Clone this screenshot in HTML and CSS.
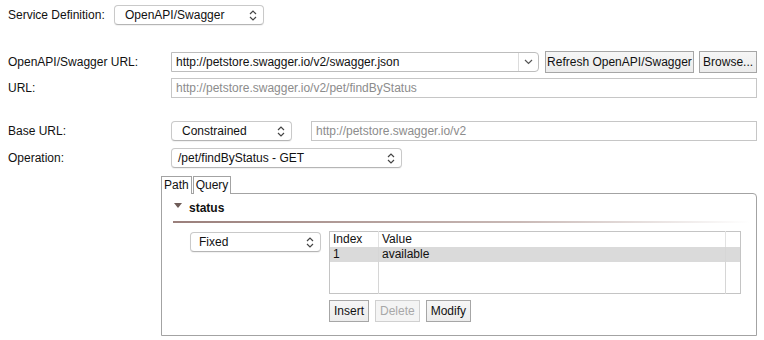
FILE: index.html
```html
<!DOCTYPE html>
<html>
<head>
    <title>Service Definition</title>
    <link rel="stylesheet" href="styles.css">
</head>
<body>
    <div class="form">
        <div class="row row-service">
            <span class="label label-short">Service Definition:</span>
            <div class="select select-service">
                <span>OpenAPI/Swagger</span>
                <svg class="updown" width="8" height="11" viewBox="0 0 8 11"><path d="M1 4 L4 1 L7 4 M1 7 L4 10 L7 7" fill="none" stroke="#444" stroke-width="1.2"/></svg>
            </div>
        </div>

        <div class="row row-swagger">
            <span class="label">OpenAPI/Swagger URL:</span>
            <div class="combo">
                <span class="combo-text">http://petstore.swagger.io/v2/swagger.json</span>
                <span class="combo-arrow">
                    <svg width="9" height="6" viewBox="0 0 9 6"><path d="M1 1 L4.5 4.5 L8 1" fill="none" stroke="#555" stroke-width="1.2"/></svg>
                </span>
            </div>
            <button class="btn btn-refresh">Refresh OpenAPI/Swagger</button>
            <button class="btn btn-browse">Browse...</button>
        </div>

        <div class="row row-url">
            <span class="label">URL:</span>
            <div class="field">http://petstore.swagger.io/v2/pet/findByStatus</div>
        </div>

        <div class="row row-base">
            <span class="label">Base URL:</span>
            <div class="select select-base">
                <span>Constrained</span>
                <svg class="updown" width="8" height="11" viewBox="0 0 8 11"><path d="M1 4 L4 1 L7 4 M1 7 L4 10 L7 7" fill="none" stroke="#444" stroke-width="1.2"/></svg>
            </div>
            <div class="field field-base">http://petstore.swagger.io/v2</div>
        </div>

        <div class="row row-operation">
            <span class="label">Operation:</span>
            <div class="select select-operation">
                <span>/pet/findByStatus - GET</span>
                <svg class="updown" width="8" height="11" viewBox="0 0 8 11"><path d="M1 4 L4 1 L7 4 M1 7 L4 10 L7 7" fill="none" stroke="#444" stroke-width="1.2"/></svg>
            </div>
        </div>

        <div class="tabs">
            <div class="tab-bar">
                <span class="tab">Path</span>
                <span class="tab tab-active">Query</span>
            </div>
            <div class="tab-panel">
                <div class="param-head">
                    <svg class="disclosure" width="8" height="6" viewBox="0 0 8 6"><path d="M0 0 L8 0 L4 5 Z" fill="#6e5c58"/></svg>
                    <span class="param-name">status</span>
                </div>
                <div class="param-line"></div>

                <div class="param-body">
                    <div class="select select-fixed">
                        <span>Fixed</span>
                        <svg class="updown" width="8" height="11" viewBox="0 0 8 11"><path d="M1 4 L4 1 L7 4 M1 7 L4 10 L7 7" fill="none" stroke="#444" stroke-width="1.2"/></svg>
                    </div>
                    <div class="values">
                        <table class="grid">
                            <thead>
                                <tr><th class="col-index">Index</th><th class="col-value">Value</th><th class="col-end"></th></tr>
                            </thead>
                            <tbody>
                                <tr class="selected"><td>1</td><td>available</td><td></td></tr>
                                <tr class="empty"><td></td><td></td><td></td></tr>
                            </tbody>
                        </table>
                        <div class="grid-buttons">
                            <button class="btn">Insert</button>
                            <button class="btn" disabled>Delete</button>
                            <button class="btn">Modify</button>
                        </div>
                    </div>
                </div>
            </div>
        </div>
    </div>
</body>
</html>
```

FILE: styles.css
```css
body {
    margin: 0;
    font-family: "Liberation Sans", Arial, sans-serif;
    font-size: 12px;
    color: #111;
    background: #fff;
}
.form {
    padding: 5px 7px 0 8px;
}
.row {
    display: flex;
    align-items: center;
}
.label {
    width: 163px;
    flex: none;
}
.label-short {
    width: 106px;
}
.row-service { height: 20px; }
.row-swagger { height: 22px; margin-top: 26px; }
.row-url { height: 20px; margin-top: 5px; }
.row-base { height: 20px; margin-top: 23px; }
.row-operation { height: 20px; margin-top: 7px; }

.select {
    box-sizing: border-box;
    height: 20px;
    display: flex;
    align-items: center;
    justify-content: space-between;
    padding: 0 6px 0 10px;
    border: 1px solid #c9c9c9;
    border-bottom-color: #b5b5b5;
    border-radius: 4px;
    background: #fff;
    box-shadow: 0 1px 1px rgba(0, 0, 0, 0.06);
}
.select-service { width: 150px; }
.select-base { width: 121px; }
.select-operation { width: 231px; padding-left: 6px; }
.select-fixed { width: 131px; padding-left: 8px; }

.combo {
    box-sizing: border-box;
    width: 369px;
    height: 20px;
    display: flex;
    align-items: center;
    border: 1px solid #bdbdbd;
    border-radius: 0 4px 4px 0;
    background: #fff;
}
.combo-text {
    flex: 1;
    padding-left: 4px;
}
.combo-arrow {
    width: 19px;
    height: 18px;
    display: flex;
    align-items: center;
    justify-content: center;
    border-left: 1px solid #dcdcdc;
}

.btn {
    box-sizing: border-box;
    height: 22px;
    padding: 0 5px;
    font-family: inherit;
    font-size: 12px;
    white-space: nowrap;
    color: #111;
    background: linear-gradient(#f6f6f6, #ececec);
    border: 1px solid #a6a6a6;
    border-radius: 0;
}
.btn:disabled {
    color: #a8a8a8;
    border-color: #d0d0d0;
    background: #f4f4f4;
}
.btn-refresh { margin-left: 6px; width: 150px; padding: 0; }
.btn-browse { margin-left: 5px; width: 58px; padding: 0; }

.field {
    box-sizing: border-box;
    flex: 1;
    height: 20px;
    line-height: 18px;
    padding-left: 4px;
    border: 1px solid #c6c6c6;
    color: #8c8c8c;
    background: #fff;
}
.field-base { margin-left: 19px; }

.tabs {
    margin: 8px 0 0 153px;
}
.tab-bar {
    display: flex;
    height: 17px;
}
.tab {
    box-sizing: border-box;
    height: 18px;
    line-height: 16px;
    padding: 0 2px;
    border: 1px solid #a3a3a3;
    border-bottom: none;
    background: #fff;
    position: relative;
    z-index: 1;
}
.tab-active { margin-left: 1px; }
.tab-panel {
    box-sizing: border-box;
    height: 143px;
    border: 1px solid #a3a3a3;
    border-top-right-radius: 4px;
    padding: 0 6px 0 11px;
}
.param-head {
    display: flex;
    align-items: center;
    height: 27px;
}
.disclosure {
    margin: -4px 0 0 1px;
}
.param-name {
    font-weight: bold;
    margin-left: 7px;
}
.param-line {
    height: 2px;
    background: linear-gradient(to right, #9a7f7b, #c9b9b6 60%, rgba(255, 255, 255, 0));
}
.param-body {
    display: flex;
    align-items: flex-start;
    padding: 8px 0 0 17px;
}
.select-fixed { margin-top: 1px; }
.values {
    margin-left: 8px;
}
.grid {
    width: 412px;
    border-collapse: collapse;
    border: 1px solid #c4c4c4;
}
.grid th, .grid td {
    height: 15px;
    padding: 0 0 0 3px;
    text-align: left;
    font-weight: normal;
    line-height: 15px;
}
.grid th + th {
    border-left: 1px solid #e2e2e2;
}
.grid td + td {
    border-left: 1px solid #d6d6d6;
}
.col-index { width: 45px; }
.col-end { width: 11px; }
.grid tr.selected td {
    background: #dadada;
}
.grid tr.empty td {
    height: 31px;
}
.grid-buttons {
    display: flex;
    gap: 6px;
    margin-top: 6px;
}
.grid-buttons .btn { padding: 0 4px; }
```
